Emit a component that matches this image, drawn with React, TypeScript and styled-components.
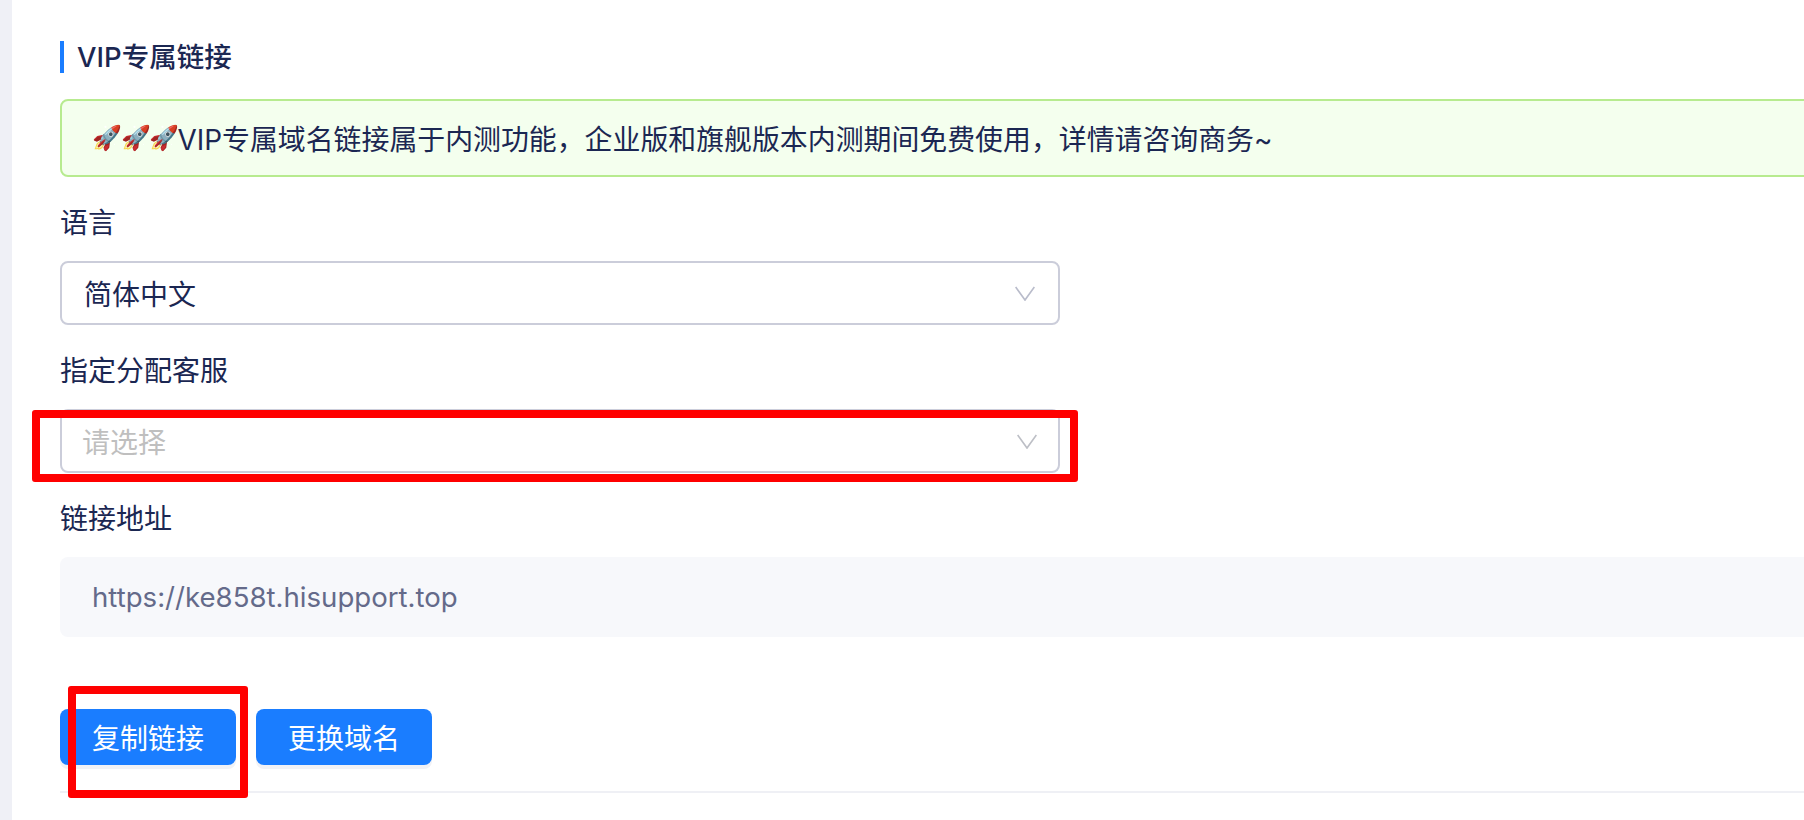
import React from "react";
import styled, { createGlobalStyle } from "styled-components";

const Global = createGlobalStyle`
  html, body { margin: 0; padding: 0; background: #fff; overflow: hidden; }
  body { font-family: Inter, "Liberation Sans", "Noto Sans CJK SC", sans-serif; color: #1b2752; }
`;

const Page = styled.div`
  width: 1804px;
  height: 820px;
  display: flex;
  overflow: hidden;
  background: #eff0f6;
`;

const Panel = styled.main`
  margin-left: 12px;
  flex: 1;
  min-width: 0;
  background: #fff;
  padding: 41px 0 0 48px;
  box-sizing: border-box;
  overflow: hidden;
`;

const Title = styled.h2`
  margin: 0;
  height: 32px;
  line-height: 32px;
  padding-left: 13px;
  border-left: 4px solid #1a7dff;
  font-size: 27.5px;
  font-weight: 500;
  color: #1b2752;
`;

const Alert = styled.div`
  margin-top: 26px;
  width: 1800px;
  height: 78px;
  box-sizing: border-box;
  padding-left: 30px;
  display: flex;
  align-items: center;
  background: #f4ffee;
  border: 2px solid #b7eb8f;
  border-radius: 8px;
  font-size: 27.9px;
`;

const Emoji = styled.span`
  font-size: 24px;
  line-height: 1;
  letter-spacing: -1.5px;
`;

const Label = styled.div`
  margin-top: 26px;
  height: 40px;
  line-height: 40px;
  font-size: 28px;
`;

const SelectBox = styled.div`
  margin-top: 18px;
  width: 1000px;
  height: 64px;
  box-sizing: border-box;
  padding: 0 21px 0 22px;
  display: flex;
  align-items: center;
  justify-content: space-between;
  border: 2px solid #cbcdda;
  border-radius: 8px;
  font-size: 28px;
`;

const Placeholder = styled.span`
  margin-left: -2px;
  color: #bfbfbf;
`;

const Chevron = styled.svg<{ $muted?: boolean }>`
  width: 20px;
  height: 15px;
  margin-right: ${(p) => (p.$muted ? "0" : "2px")};
  fill: none;
  stroke: ${(p) => (p.$muted ? "#bdbfc6" : "#b9bccb")};
  stroke-width: 1.7;
`;

const LinkField = styled.div`
  margin-top: 18px;
  width: 1800px;
  height: 80px;
  box-sizing: border-box;
  padding-left: 32px;
  display: flex;
  align-items: center;
  background: #f7f8fb;
  border-radius: 8px;
  font-size: 27.6px;
  color: #646a8a;
`;

const Actions = styled.div`
  margin-top: 72px;
  display: flex;
  gap: 20px;
`;

const Button = styled.button`
  width: 176px;
  height: 56px;
  padding: 0;
  border: 0;
  border-radius: 8px;
  background: #1a7dff;
  color: #fff;
  font: inherit;
  font-size: 28px;
  box-shadow: 0 4px 0 #f1f2f6;
`;

const Divider = styled.div`
  margin-top: 26px;
  width: 1800px;
  height: 2px;
  background: #eff0f5;
`;

const Mark = styled.div<{ $x: number; $y: number; $w: number; $h: number }>`
  position: absolute;
  left: ${(p) => p.$x}px;
  top: ${(p) => p.$y}px;
  width: ${(p) => p.$w}px;
  height: ${(p) => p.$h}px;
  box-sizing: border-box;
  border: 8px solid #ff0000;
  border-radius: 3px;
  pointer-events: none;
`;

const Arrow = ({ muted }: { muted?: boolean }) => (
  <Chevron viewBox="0 0 20 15" $muted={muted}>
    <path d="M0.6 1 L10 14 L19.4 1" />
  </Chevron>
);

export default function App() {
  return (
    <>
      <Global />
      <Page>
        <Panel>
          <Title>VIP专属链接</Title>
          <Alert>
            <Emoji>🚀🚀🚀</Emoji>
            VIP专属域名链接属于内测功能，企业版和旗舰版本内测期间免费使用，详情请咨询商务~
          </Alert>
          <Label>语言</Label>
          <SelectBox>
            <span>简体中文</span>
            <Arrow />
          </SelectBox>
          <Label>指定分配客服</Label>
          <SelectBox>
            <Placeholder>请选择</Placeholder>
            <Arrow muted />
          </SelectBox>
          <Label>链接地址</Label>
          <LinkField>https://ke858t.hisupport.top</LinkField>
          <Actions>
            <Button>复制链接</Button>
            <Button>更换域名</Button>
          </Actions>
          <Divider />
        </Panel>
      </Page>
      <Mark $x={32} $y={410} $w={1046} $h={72} />
      <Mark $x={68} $y={686} $w={180} $h={112} />
    </>
  );
}
